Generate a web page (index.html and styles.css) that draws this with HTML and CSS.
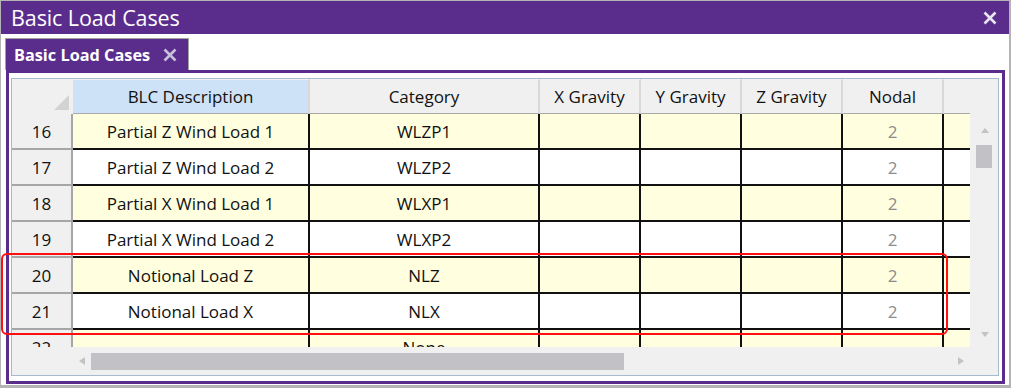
FILE: index.html
```html
<!DOCTYPE html>
<html>
<head>
<meta charset="utf-8">
<title>Basic Load Cases</title>
<link rel="stylesheet" href="styles.css">
</head>
<body>
<div class="window">
  <div class="titlebar">
    <span class="title">Basic Load Cases</span>
    <svg class="close" viewBox="0 0 14 14" width="14" height="14"><path d="M1.5 1.5 L12.5 12.5 M12.5 1.5 L1.5 12.5" stroke="#e9e5f1" stroke-width="2.6" fill="none"/></svg>
  </div>
  <div class="tabstrip">
    <div class="tab">
      <span class="tab-label">Basic Load Cases</span>
      <svg class="tab-close" viewBox="0 0 14 14" width="14" height="14"><path d="M1.5 1.5 L12.5 12.5 M12.5 1.5 L1.5 12.5" stroke="#c9c0db" stroke-width="2.6" fill="none"/></svg>
    </div>
  </div>
  <div class="frame">
    <div class="gridbox">
      <div class="gridarea">
        <div class="viewport">
          <div class="grid">
            <div class="hcell corner"><svg width="15" height="15" viewBox="0 0 15 15"><polygon points="15,0 15,15 0,15" fill="#d3d3d3"/></svg></div>
            <div class="hcell active">BLC Description</div>
            <div class="hcell">Category</div>
            <div class="hcell">X Gravity</div>
            <div class="hcell">Y Gravity</div>
            <div class="hcell">Z Gravity</div>
            <div class="hcell">Nodal</div>
            <div class="hcell last"></div>

            <div class="rh">16</div><div class="cell y">Partial Z Wind Load 1</div><div class="cell y">WLZP1</div><div class="cell y"></div><div class="cell y"></div><div class="cell y"></div><div class="cell y num">2</div><div class="cell y last"></div>
            <div class="rh">17</div><div class="cell">Partial Z Wind Load 2</div><div class="cell">WLZP2</div><div class="cell"></div><div class="cell"></div><div class="cell"></div><div class="cell num">2</div><div class="cell last"></div>
            <div class="rh">18</div><div class="cell y">Partial X Wind Load 1</div><div class="cell y">WLXP1</div><div class="cell y"></div><div class="cell y"></div><div class="cell y"></div><div class="cell y num">2</div><div class="cell y last"></div>
            <div class="rh">19</div><div class="cell">Partial X Wind Load 2</div><div class="cell">WLXP2</div><div class="cell"></div><div class="cell"></div><div class="cell"></div><div class="cell num">2</div><div class="cell last"></div>
            <div class="rh">20</div><div class="cell y">Notional Load Z</div><div class="cell y">NLZ</div><div class="cell y"></div><div class="cell y"></div><div class="cell y"></div><div class="cell y num">2</div><div class="cell y last"></div>
            <div class="rh">21</div><div class="cell">Notional Load X</div><div class="cell">NLX</div><div class="cell"></div><div class="cell"></div><div class="cell"></div><div class="cell num">2</div><div class="cell last"></div>
            <div class="rh">22</div><div class="cell y"></div><div class="cell y">None</div><div class="cell y"></div><div class="cell y"></div><div class="cell y"></div><div class="cell y num"></div><div class="cell y last"></div>
          </div>
        </div>
        <div class="vscroll">
          <div class="arrow-up"></div>
          <div class="vthumb"></div>
          <div class="arrow-down"></div>
        </div>
      </div>
      <div class="hscroll">
        <div class="hs-spacer"></div>
        <div class="hs-track">
          <div class="arrow-left"></div>
          <div class="hthumb"></div>
          <div class="arrow-right"></div>
        </div>
        <div class="hs-corner"></div>
      </div>
    </div>
  </div>
  <div class="highlight"></div>
</div>
</body>
</html>
```

FILE: styles.css
```css
* { box-sizing: border-box; }
html, body { margin: 0; padding: 0; }
body {
  width: 1011px;
  height: 388px;
  overflow: hidden;
  background: #ffffff;
  font-family: "Open Sans", "Noto Sans", sans-serif;
  color: #111;
}
.window {
  position: relative;
  width: 1011px;
  height: 388px;
  border-style: solid;
  border-color: #b4b4b4;
  border-width: 1px 2px 3px 1px;
  background: #fff;
  display: flex;
  flex-direction: column;
}
.titlebar {
  flex: none;
  height: 33px;
  background: #5a2d8d;
  color: #fff;
  display: flex;
  align-items: center;
  justify-content: space-between;
  padding: 0 12px 0 10px;
}
.title { font-size: 21.5px; line-height: 1; letter-spacing: -0.1px; }
.close { display: block; }
.tabstrip {
  flex: none;
  height: 36px;
  display: flex;
  align-items: flex-end;
  padding-left: 4px;
}
.tab {
  width: 184px;
  height: 32px;
  background: #5a2d8d;
  border: 1px solid #a4a4a4;
  border-bottom: none;
  display: flex;
  align-items: center;
  justify-content: space-between;
  padding: 0 11px 0 8px;
}
.tab-label { color: #fff; font-weight: 700; font-size: 16.3px; }
.tab-close { display: block; }
.frame {
  flex: none;
  height: 314px;
  margin: 0 4px 1px 5px;
  border: 3px solid #5a2d8d;
  padding: 5px 3px 5px 2px;
}
.gridbox {
  height: 298px;
  border: 1px solid #a7b9cd;
  background: #f0f0f0;
  display: flex;
  flex-direction: column;
}
.gridarea { display: flex; height: 268px; }
.viewport { width: 958px; height: 268px; overflow: hidden; }
.grid {
  display: grid;
  grid-template-columns: 61px 237px 230px 101px 101px 101px 101px 26px;
  font-size: 17px;
}
.hcell {
  height: 35px;
  background: #f0f0f0;
  border-top: 1px solid #f3f3f3;
  border-bottom: 1px solid #a9a9a9;
  border-right: 2px solid #d9d9d9;
  display: flex;
  align-items: center;
  justify-content: center;
  color: #111;
}
.hcell.corner {
  border-right: none;
  border-bottom-color: #f0f0f0;
  justify-content: flex-end;
  align-items: flex-end;
  padding: 0 4px 3px 0;
}
.hcell.corner svg { display: block; }
.hcell.active { background: #cde1f7; }
.hcell.last { border-right: none; }
.rh {
  height: 36px;
  background: #f0f0f0;
  border-right: 2px solid #a6a6a6;
  border-bottom: 2px solid #a6a6a6;
  display: flex;
  align-items: center;
  justify-content: center;
}
.cell {
  height: 36px;
  background: #fff;
  border-right: 2px solid #111;
  border-bottom: 2px solid #111;
  display: flex;
  align-items: center;
  justify-content: center;
  white-space: nowrap;
}
.cell.y { background: #ffffdf; }
.cell.last { border-right: none; }
.cell.num { color: #8c8c8c; }
.vscroll {
  width: 28px;
  height: 268px;
  display: flex;
  flex-direction: column;
  align-items: center;
  padding: 49px 0 10px 0;
}
.arrow-up {
  width: 0; height: 0;
  border-left: 4.5px solid transparent;
  border-right: 4.5px solid transparent;
  border-bottom: 5px solid #c3c3c3;
  margin-left: 1px;
}
.vthumb {
  width: 16px;
  height: 23px;
  background: #c2c2c6;
  margin-top: 12px;
}
.arrow-down {
  margin-top: auto;
  width: 0; height: 0;
  border-left: 4.5px solid transparent;
  border-right: 4.5px solid transparent;
  border-top: 5px solid #c3c3c3;
  margin-left: 1px;
}
.hscroll { display: flex; height: 28px; }
.hs-spacer { width: 61px; flex: none; }
.hs-track {
  width: 897px;
  flex: none;
  display: flex;
  align-items: center;
  padding: 0 6px 0 6px;
}
.arrow-left {
  width: 0; height: 0;
  border-top: 4px solid transparent;
  border-bottom: 4px solid transparent;
  border-right: 6px solid #c3c3c3;
}
.hthumb {
  width: 533px;
  height: 17px;
  background: #c2c2c6;
  margin-left: 6px;
}
.arrow-right {
  margin-left: auto;
  width: 0; height: 0;
  border-top: 4px solid transparent;
  border-bottom: 4px solid transparent;
  border-left: 6px solid #c3c3c3;
}
.hs-corner { flex: 1; }
.highlight {
  position: absolute;
  left: 0;
  top: 252px;
  width: 947px;
  height: 82px;
  border: 2px solid #ff1010;
  border-radius: 6px;
  pointer-events: none;
}
```
